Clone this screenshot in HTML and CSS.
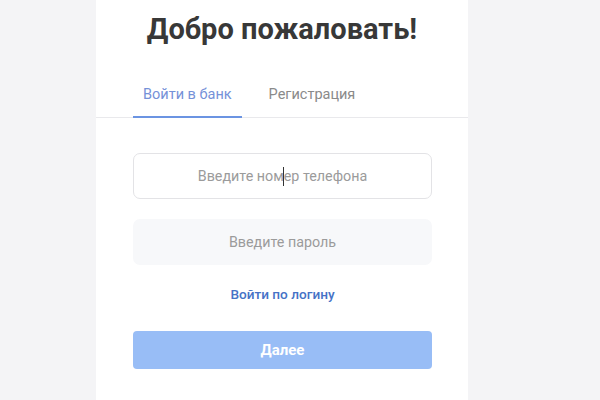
FILE: index.html
```html
<!DOCTYPE html>
<html lang="ru">
<head>
<meta charset="utf-8">
<title>Вход</title>
<link rel="stylesheet" href="styles.css">
</head>
<body>
<div class="page">
  <div class="card">
    <h1 class="title">Добро пожаловать!</h1>
    <div class="tabs">
      <div class="tab active">Войти в банк</div>
      <div class="tab">Регистрация</div>
    </div>
    <div class="form">
      <div class="field bordered">Введите ном<span class="caret"></span>ер телефона</div>
      <div class="field filled">Введите пароль</div>
      <div class="link">Войти по логину</div>
      <div class="btn">Далее</div>
    </div>
  </div>
</div>
</body>
</html>
```
FILE: styles.css
```css
html, body {
  margin: 0;
  padding: 0;
  height: 100%;
  background: #f4f4f6;
  font-family: Roboto, "Liberation Sans", sans-serif;
}
.page {
  display: flex;
  height: 100%;
  padding-left: 96px;
}
.card {
  width: 372px;
  background: #ffffff;
  height: 100%;
}
.title {
  margin: 12px 0 0;
  font-size: 29px;
  line-height: 34px;
  font-weight: 700;
  color: #383838;
  text-align: center;
}
.tabs {
  display: flex;
  gap: 17px;
  margin-top: 39px;
  padding-left: 37px;
  border-bottom: 1px solid #e9e9ec;
}
.tab {
  font-size: 14.5px;
  line-height: 20px;
  padding: 0 10px 11px;
  margin-bottom: -1px;
  border-bottom: 2px solid transparent;
  color: #8a8a8a;
}
.tab.active {
  color: #7591d8;
  border-bottom-color: #6b94e2;
}
.form {
  display: flex;
  flex-direction: column;
  padding: 0 36px 0 37px;
  margin-top: 35px;
}
.field {
  height: 46px;
  box-sizing: border-box;
  border-radius: 7px;
  display: flex;
  align-items: center;
  justify-content: center;
  font-size: 14.3px;
  color: #9b9b9b;
}
.bordered {
  border: 1px solid #e3e3e6;
  background: #ffffff;
}
.filled {
  margin-top: 20px;
  background: #f7f8fa;
}
.caret {
  display: inline-block;
  width: 1px;
  height: 19px;
  background: #333333;
  margin: 0 -0.5px;
}
.link {
  margin-top: 19px;
  font-size: 13.6px;
  line-height: 20px;
  font-weight: 500;
  color: #4672c6;
  text-align: center;
}
.btn {
  margin-top: 27px;
  height: 38px;
  border-radius: 4px;
  background: #98bdf6;
  color: #ffffff;
  font-size: 15px;
  font-weight: 700;
  display: flex;
  align-items: center;
  justify-content: center;
}
```
